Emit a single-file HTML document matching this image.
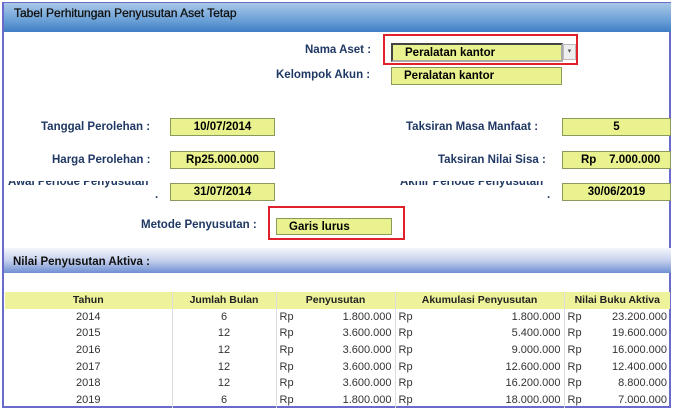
<!DOCTYPE html><html><head><style>
body{margin:0;width:675px;height:411px;background:#fff;font-family:"Liberation Sans",sans-serif;overflow:hidden;position:relative}
.a{position:absolute}
.lbl{position:absolute;font-size:11.5px;font-weight:bold;color:#1f3864;white-space:nowrap}
.box{position:absolute;background:#e9f28e;border:1px solid #8a9a5b;font-size:11.5px;font-weight:bold;color:#000;box-sizing:border-box;line-height:16px}
table{border-collapse:collapse;font-size:11px;color:#333;table-layout:fixed}
td{padding:0 3px;height:16.6px;border-right:1px solid #ddd;overflow:hidden;white-space:nowrap}
</style></head><body>
<div class="a" style="left:2px;top:2px;width:669px;height:406px;border:2px solid #6a6acb;border-top:1px solid #6a6acb;box-sizing:border-box"></div>
<div class="a" style="left:4px;top:3px;width:667px;height:29px;background:linear-gradient(#a9c8e8,#6aa0d6 60%,#3f7ec4);"></div>
<div class="lbl" style="left:14px;top:6px;color:#111;font-weight:normal;font-size:12px;-webkit-text-stroke:0.3px #111">Tabel Perhitungan Penyusutan Aset Tetap</div>
<div class="a" style="left:383px;top:34px;width:195px;height:31px;border:2px solid #e0202a;box-sizing:border-box"></div>
<div class="lbl" style="left:305px;top:44px">Nama Aset :</div>
<div class="box" style="left:391px;top:43px;width:172px;height:19px;border:2px solid #444;border-right-color:#aaa;border-bottom-color:#aaa;padding-left:12px">Peralatan kantor</div>
<div class="a" style="left:563px;top:44px;width:11px;height:14px;background:#eee;border:1px solid #bbb;font-size:7px;text-align:center;line-height:14px;color:#555">▾</div>
<div class="lbl" style="left:276px;top:69px">Kelompok Akun :</div>
<div class="box" style="left:391px;top:67px;width:171px;height:18px;padding-left:12px">Peralatan kantor</div>
<div class="lbl" style="left:41px;top:121px">Tanggal Perolehan :</div>
<div class="box" style="left:170px;top:118px;width:105px;height:18px;text-align:center">10/07/2014</div>
<div class="lbl" style="left:52px;top:154px">Harga Perolehan :</div>
<div class="box" style="left:170px;top:151px;width:105px;height:18px;text-align:center">Rp25.000.000</div>
<div class="lbl" style="left:406px;top:121px">Taksiran Masa Manfaat :</div>
<div class="box" style="left:562px;top:118px;width:109px;height:18px;text-align:center">5</div>
<div class="lbl" style="left:438px;top:154px">Taksiran Nilai Sisa :</div>
<div class="box" style="left:562px;top:151px;width:109px;height:18px;padding-left:18px">Rp&nbsp;&nbsp;&nbsp; 7.000.000</div>
<div class="lbl" style="left:8px;top:176px;clip-path:inset(5px 0 0 0)">Awal Periode Penyusutan</div>
<div class="lbl" style="left:155px;top:189px">.</div>
<div class="box" style="left:170px;top:183px;width:105px;height:18px;text-align:center">31/07/2014</div>
<div class="lbl" style="left:400px;top:176px;clip-path:inset(5px 0 0 0)">Akhir Periode Penyusutan</div>
<div class="lbl" style="left:547px;top:189px">.</div>
<div class="box" style="left:562px;top:183px;width:109px;height:18px;text-align:center">30/06/2019</div>
<div class="a" style="left:268px;top:206px;width:137px;height:34px;border:2px solid #e0202a;box-sizing:border-box"></div>
<div class="lbl" style="left:141px;top:219px">Metode Penyusutan :</div>
<div class="box" style="left:276px;top:218px;width:116px;height:17px;padding-left:12px">Garis lurus</div>
<div class="a" style="left:4px;top:248px;width:667px;height:25px;background:linear-gradient(#f4f6fb,#c4d0ec 50%,#6f8fd3)"></div>
<div class="lbl" style="left:13px;top:256px;color:#111">Nilai Penyusutan Aktiva :</div>
<table class="a" style="left:5px;top:292px;width:665px">
<colgroup><col style="width:167px"><col style="width:104px"><col style="width:24px"><col style="width:95px"><col style="width:24px"><col style="width:145px"><col style="width:24px"><col style="width:82px"></colgroup>
<tr style="background:#eef29a;font-weight:bold;color:#222;font-size:10.5px"><td style="text-align:center">Tahun</td><td style="text-align:center">Jumlah Bulan</td><td colspan="2" style="text-align:center">Penyusutan</td><td colspan="2" style="text-align:center">Akumulasi Penyusutan</td><td colspan="2" style="text-align:center;border:none">Nilai Buku Aktiva</td></tr>
<tr><td align="center">2014</td><td align="center">6</td><td style="border:none">Rp</td><td align="right">1.800.000</td><td style="border:none">Rp</td><td align="right">1.800.000</td><td style="border:none">Rp</td><td align="right" style="border:none">23.200.000</td></tr>
<tr><td align="center">2015</td><td align="center">12</td><td style="border:none">Rp</td><td align="right">3.600.000</td><td style="border:none">Rp</td><td align="right">5.400.000</td><td style="border:none">Rp</td><td align="right" style="border:none">19.600.000</td></tr>
<tr><td align="center">2016</td><td align="center">12</td><td style="border:none">Rp</td><td align="right">3.600.000</td><td style="border:none">Rp</td><td align="right">9.000.000</td><td style="border:none">Rp</td><td align="right" style="border:none">16.000.000</td></tr>
<tr><td align="center">2017</td><td align="center">12</td><td style="border:none">Rp</td><td align="right">3.600.000</td><td style="border:none">Rp</td><td align="right">12.600.000</td><td style="border:none">Rp</td><td align="right" style="border:none">12.400.000</td></tr>
<tr><td align="center">2018</td><td align="center">12</td><td style="border:none">Rp</td><td align="right">3.600.000</td><td style="border:none">Rp</td><td align="right">16.200.000</td><td style="border:none">Rp</td><td align="right" style="border:none">8.800.000</td></tr>
<tr><td align="center">2019</td><td align="center">6</td><td style="border:none">Rp</td><td align="right">1.800.000</td><td style="border:none">Rp</td><td align="right">18.000.000</td><td style="border:none">Rp</td><td align="right" style="border:none">7.000.000</td></tr>
</table>
</body></html>
